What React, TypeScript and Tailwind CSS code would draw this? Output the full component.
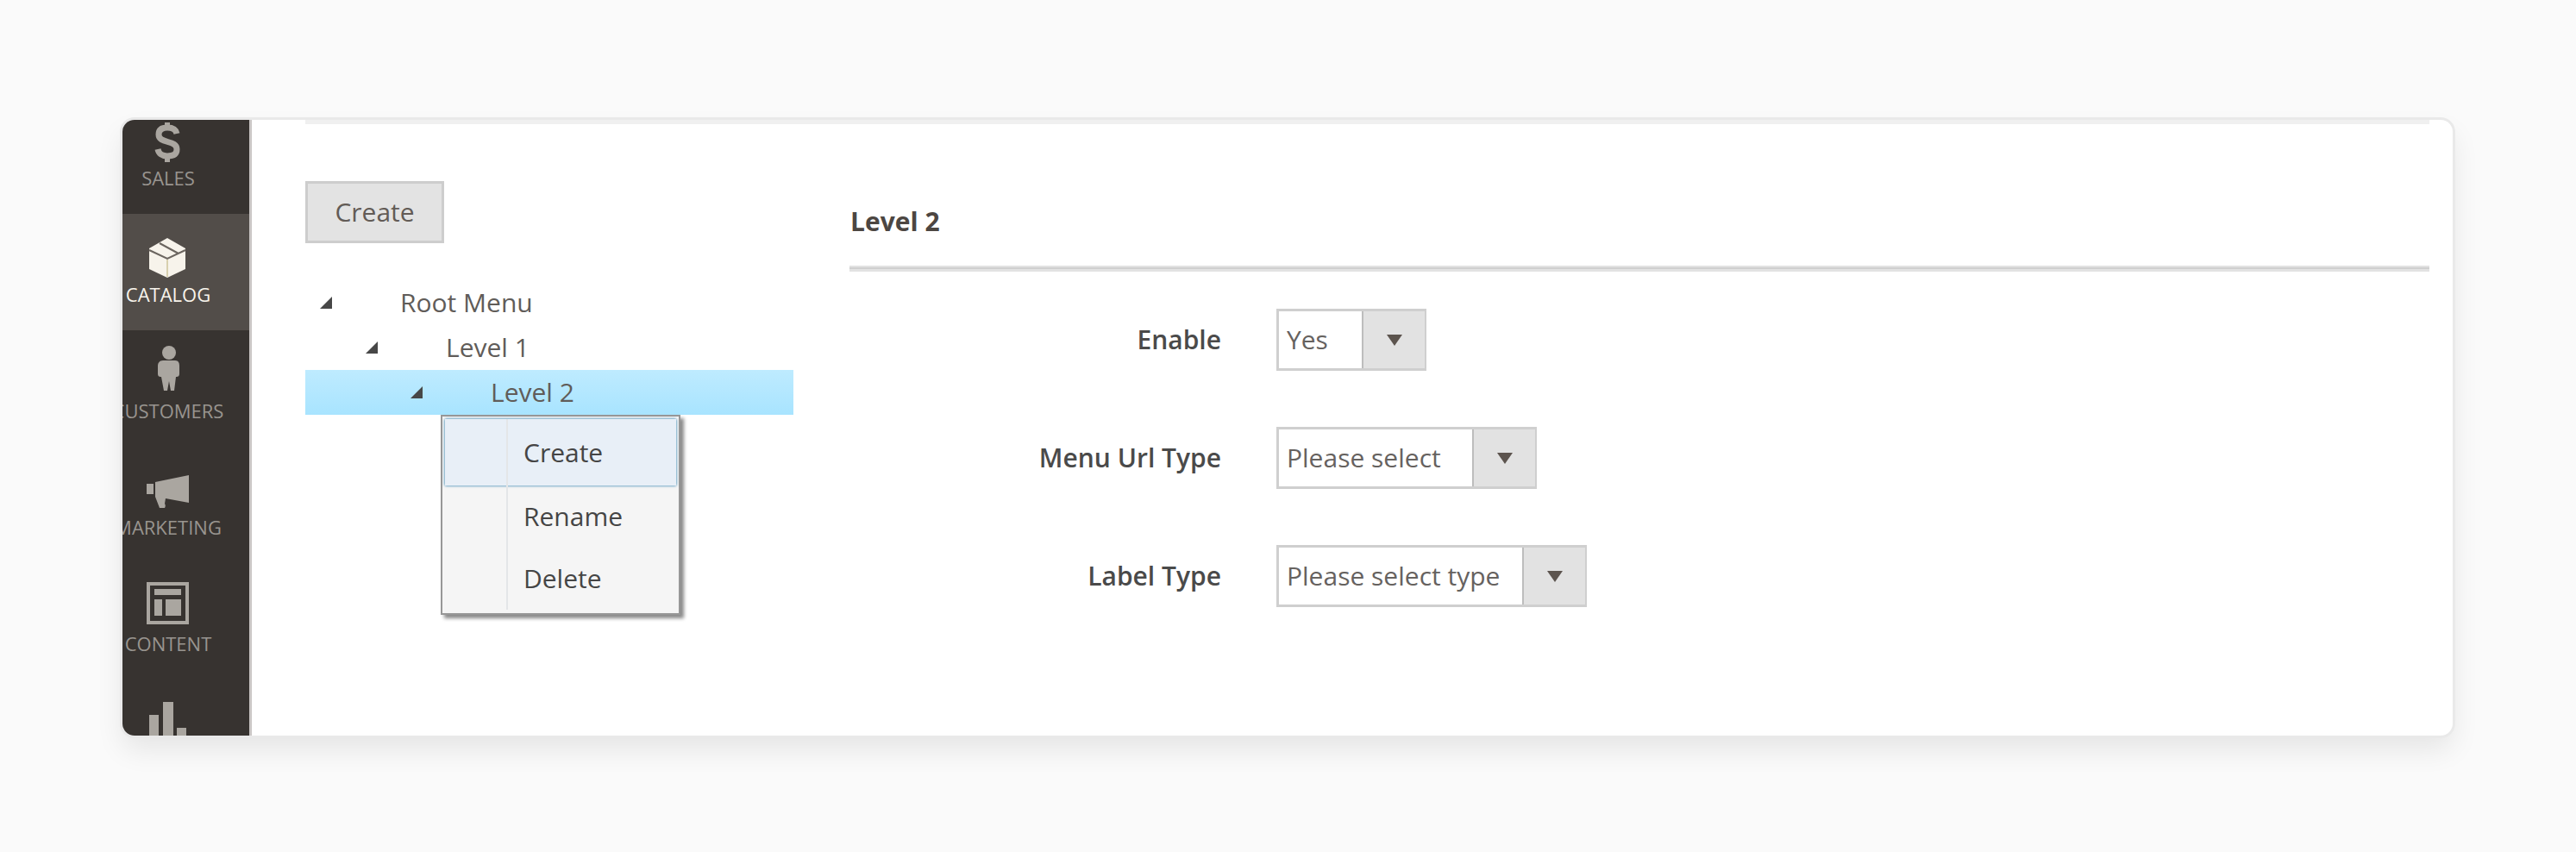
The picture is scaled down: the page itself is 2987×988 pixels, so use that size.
import React, { ReactNode, useState } from 'react';
import clsx from 'clsx';

interface NavItemProps {
  label: string;
  active?: boolean;
  children: ReactNode;
}

function NavItem({ label, active, children }: NavItemProps) {
  return (
    <li>
      <a
        href="#"
        className={clsx(
          'flex h-[135px] flex-col items-center pt-4',
          active ? 'bg-[#524d49] text-[#f7f3eb]' : 'text-[#aaa6a0]'
        )}
      >
        <svg width="60" height="60" viewBox="0 0 60 60" fill="currentColor" className="shrink-0" aria-hidden="true">
          {children}
        </svg>
        <span className={clsx('mt-1.5 text-[22px] leading-[22px]', active ? 'font-medium' : 'opacity-85')}>{label}</span>
      </a>
    </li>
  );
}

function Sidebar() {
  return (
    <nav className="flex w-[150px] shrink-0 justify-end overflow-hidden border-r-[3px] border-[#cac6c5] bg-[#373330]">
      <ul className="-mt-[26px] -mb-[70px] w-[188px] shrink-0">
        <NavItem label="SALES">
          <path
            d="M40 26c-1-5-5-7-11-7-6 0-10 2-10 8 0 11 21 6 21 17 0 6-4 8-11 8-6 0-10-3-11-8"
            fill="none"
            stroke="currentColor"
            strokeWidth="7"
          />
          <path d="M26 13h6v7h-6zM26 52h6v7h-6z" />
        </NavItem>
        <NavItem label="CATALOG" active>
          <path d="M29 12 50 24v24L29 58 8 48V24z" />
          <path d="M8 26l21 10 21-10M20 18l22 12" fill="none" stroke="#6b655f" strokeWidth="2" />
          <path d="M29 37v20" stroke="#d8cfae" strokeWidth="2" />
        </NavItem>
        <NavItem label="CUSTOMERS">
          <circle cx="31" cy="10" r="8" />
          <path d="M24 19h14c4 0 5 3 5 6v9c0 3-1 4-4 4l-2 16h-4l-2-11-2 11h-4l-3-16c-3 0-4-1-4-4v-9c0-3 2-6 6-6z" />
        </NavItem>
        <NavItem label="MARKETING">
          <path d="M54 17v32L27 44l-1 6c1 2 1 3 0 5h-6l-5-13V25z" />
          <path d="M5 27h8v12H5z" />
        </NavItem>
        <NavItem label="CONTENT">
          <path d="M7 8h45v45H7z" fill="none" stroke="currentColor" strokeWidth="4" />
          <path d="M14 14h31v7H14zM14 26h9v19h-9zM27 26h18v19H27z" />
        </NavItem>
        <NavItem label="REPORTS">
          <path d="M8 25h11v35H8zM24 10h12v50H24zM40 40h11v20H40z" />
        </NavItem>
      </ul>
    </nav>
  );
}

function TreeArrow() {
  return (
    <svg width="15" height="15" viewBox="0 0 15 15" className="shrink-0" aria-hidden="true">
      <path d="M14 0v14H0z" fill="#474747" />
    </svg>
  );
}

function ContextMenu() {
  return (
    <ul className="absolute top-full left-[157px] z-10 w-[278px] border-2 border-[#979797] bg-[#f5f5f5] px-[3px] pt-[3px] pb-1 text-[#454545] shadow-[4px_4px_4px_#8a8a8a]">
      {['Create', 'Rename', 'Delete'].map((action, index) => (
        <li key={action}>
          <button
            className={clsx(
              'flex w-full items-stretch text-left',
              index === 0 ? 'h-[77px] bg-[#e8eff7] shadow-[0_0_3px_#0a6aa1]' : 'h-[72px]'
            )}
          >
            <span className="mr-[18px] w-[73px] border-r-2 border-[#e4e6e8]" />
            <span className="self-center">{action}</span>
          </button>
        </li>
      ))}
    </ul>
  );
}

function MenuTree() {
  return (
    <ul className="mt-[43px] leading-[52px]">
      <li className="flex items-center pl-[17px]">
        <TreeArrow />
        <span className="ml-[78px]">Root Menu</span>
      </li>
      <li className="flex items-center pl-[70px]">
        <TreeArrow />
        <span className="ml-[78px]">Level 1</span>
      </li>
      <li className="relative flex items-center bg-linear-to-b from-[#beebff] to-[#a8e4ff] pl-[122px]">
        <TreeArrow />
        <span className="ml-[78px]">Level 2</span>
        <div className="leading-10">
          <ContextMenu />
        </div>
      </li>
    </ul>
  );
}

interface SelectFieldProps {
  id: string;
  label: string;
  options: string[];
  width: string;
}

function SelectField({ id, label, options, width }: SelectFieldProps) {
  const [value, setValue] = useState(options[0]);

  return (
    <div className="flex items-center">
      <label htmlFor={id} className="w-[431px] text-right font-semibold text-[#4a4a4a]">
        {label}
      </label>
      <div className={clsx('relative ml-16 h-[72px]', width)}>
        <select
          id={id}
          value={value}
          onChange={(e) => setValue(e.target.value)}
          className="h-full w-full appearance-none border-3 border-[#cfcfcf] bg-white pl-[9px] text-[#66625f]"
        >
          {options.map((option) => (
            <option key={option}>{option}</option>
          ))}
        </select>
        <span className="pointer-events-none absolute inset-y-[3px] right-[2px] flex w-[73px] items-center justify-center border-l-2 border-[#bdbdbd] bg-[#e2e2e2]">
          <svg width="18" height="13" viewBox="0 0 18 13" aria-hidden="true">
            <path d="M0 0h18L9 13z" fill="#5c544e" />
          </svg>
        </span>
      </div>
    </div>
  );
}

export default function App() {
  return (
    <div className="min-h-screen bg-[#fafafa] pt-[139px] pr-[143px] pb-[136px] pl-[142px] font-['Open_Sans','Noto_Sans',sans-serif] text-[30px] leading-10 text-[#605c59]">
      <div className="flex overflow-hidden rounded-[14px] bg-white shadow-[0_0_0_3px_#e9e9e9,0_16px_32px_rgba(0,0,0,0.085)]">
        <Sidebar />
        <main className="min-w-0 flex-1 pr-[27px] pb-[148px] pl-[62px]">
          <div className="h-[5px] bg-[#f0f0f0]" />
          <div className="flex gap-[65px]">
            <section className="w-[566px] shrink-0 pt-[66px]">
              <button className="h-[72px] w-[161px] border-3 border-[#cdcdcd] bg-[#e3e3e3] font-medium text-[#625b56]">
                Create
              </button>
              <MenuTree />
            </section>
            <section className="min-w-0 flex-1 pt-[93px]">
              <h2 className="pb-[31px] pl-px font-bold text-[#4c4642]">Level 2</h2>
              <div className="h-[7px] border-t-2 border-b-3 border-[#e2e2e2] bg-[#cfcfcf]" />
              <form className="mt-[43px] flex flex-col gap-[65px]">
                <SelectField id="enable" label="Enable" options={['Yes', 'No']} width="w-[174px]" />
                <SelectField id="url-type" label="Menu Url Type" options={['Please select']} width="w-[302px]" />
                <SelectField id="label-type" label="Label Type" options={['Please select type']} width="w-[360px]" />
              </form>
            </section>
          </div>
        </main>
      </div>
    </div>
  );
}
